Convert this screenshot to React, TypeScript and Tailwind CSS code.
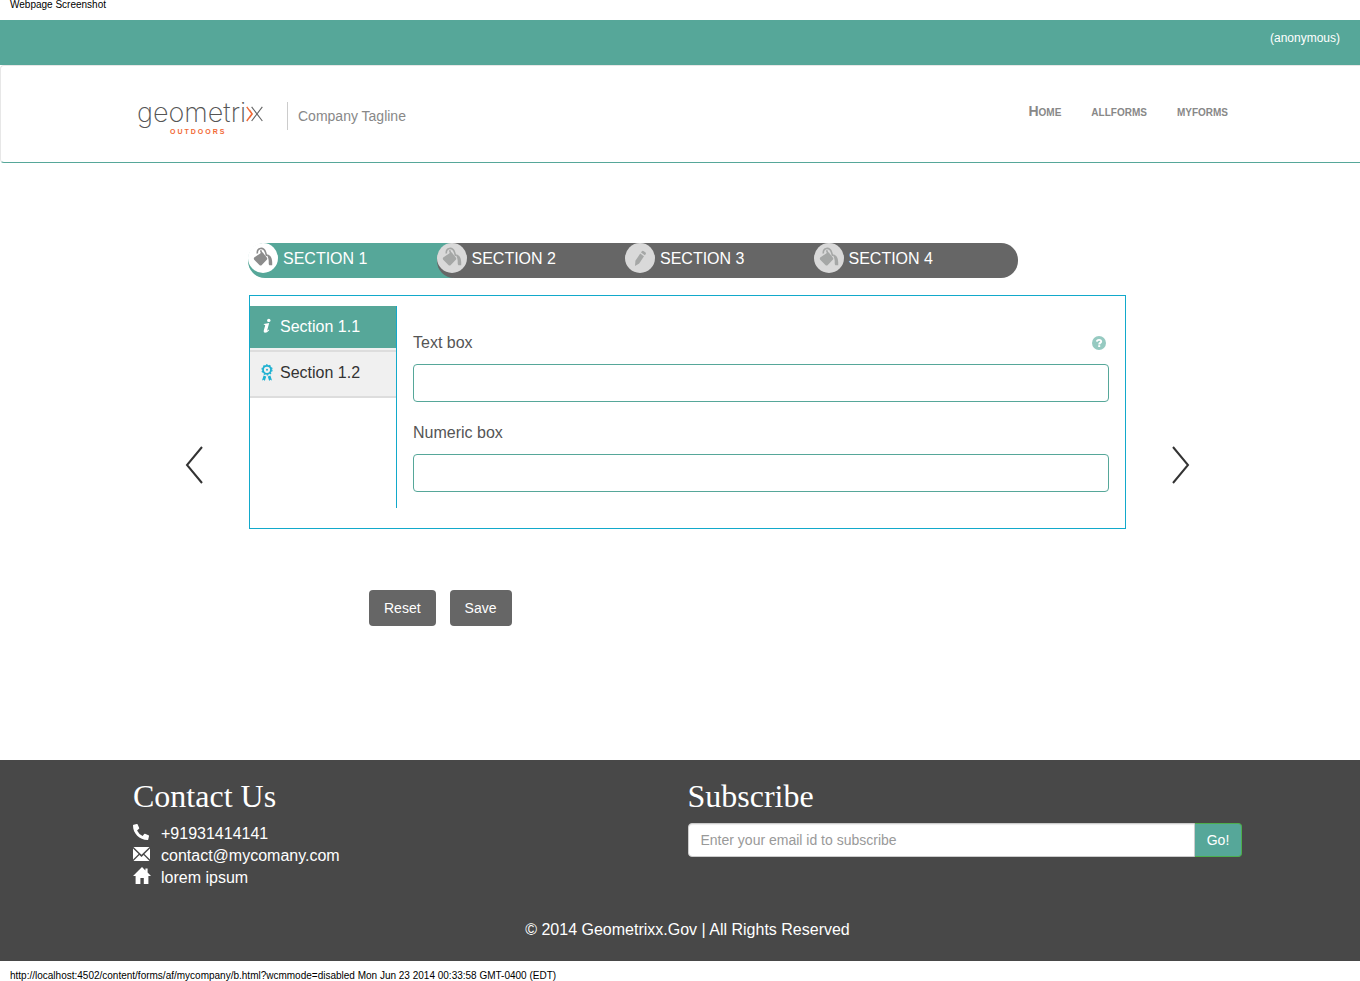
import React from "react";
import { FaPhoneAlt } from "react-icons/fa";

type StepIcon = "bucket" | "pencil";

const steps: { label: string; icon: StepIcon; active?: boolean }[] = [
  { label: "SECTION 1", icon: "bucket", active: true },
  { label: "SECTION 2", icon: "bucket" },
  { label: "SECTION 3", icon: "pencil" },
  { label: "SECTION 4", icon: "bucket" },
];

const navLinks = ["Home", "allforms", "myforms"];

function Logo() {
  return (
    <a href="#" className="flex w-[126px] flex-col" aria-label="geometrixx outdoors">
      <span className="flex h-[30px] items-center">
        <span className="font-['Inter'] text-[27px] leading-[30px] font-extralight text-[#555]">geometri</span>
        <svg width="18" height="30" viewBox="0 0 18 30" fill="none" strokeWidth="1.2" aria-hidden="true">
          <path d="M.8 8.5 6.3 16 .8 23.5M3.6 11.8 6.6 16 3.6 20.2" stroke="#f26a36" strokeWidth="1.5" />
          <path d="M6 8.5 17.4 23.5M17.4 8.5 6 23.5" stroke="#666" />
        </svg>
      </span>
      <span className="pl-[33px] font-['Liberation_Sans',sans-serif] text-[7px] leading-2 font-bold tracking-[2px] text-[#f26a36]">
        OUTDOORS
      </span>
    </a>
  );
}

function BucketIcon() {
  return (
    <svg width="30" height="30" viewBox="0 0 30 30" aria-hidden="true">
      <path d="M9.4 10.5C8.4 4.6 15.6 3.4 17.6 9.4L18.6 13" fill="none" stroke="currentColor" strokeWidth="1.6" />
      <path d="M6.2 14.6 13.6 9.4Q14.4 9 15 9.8L19 14.8Q19.6 15.8 18.8 16.8L13.8 22Q12.6 23 11.4 22L6.2 16.8Q5.4 15.4 6.2 14.6Z" fill="currentColor" />
      <path d="M12.6 7.2 14 11" fill="none" stroke="currentColor" strokeWidth="1.6" />
      <path d="M18.4 11.6C22.4 11.4 24.8 15.4 24.2 22.2H21.4C20.2 21 21 19 20.6 17 20.4 15 19.6 13 18.4 11.6Z" fill="currentColor" />
    </svg>
  );
}

function PencilIcon() {
  return (
    <svg width="30" height="30" viewBox="0 0 30 30" fill="currentColor" aria-hidden="true">
      <path d="M10 23 10.4 17.8 15.2 10.6 19 13.2 14.2 20.4Z" />
      <path d="M16 9.6 17 8.2Q17.6 7.6 18.4 8L20.6 9.6Q21.2 10.2 20.8 10.9L19.8 12.2Z" />
    </svg>
  );
}

function InfoIcon() {
  return (
    <svg width="12" height="18" viewBox="0 0 12 18" fill="currentColor" aria-hidden="true">
      <circle cx="7.8" cy="2.4" r="1.7" />
      <path d="M2.8 6 8.2 5 6.2 12.2Q6.2 13.2 7.6 11.6L8.2 12.2Q5.8 15 3.8 14.8 2.2 14.4 2.8 12.2L4.2 7.4Q4.2 6.6 2.8 6.8Z" />
    </svg>
  );
}

function RibbonIcon() {
  return (
    <svg width="12" height="18" viewBox="0 0 12 18" aria-hidden="true">
      <circle cx="6" cy="5.8" r="4" fill="none" stroke="currentColor" strokeWidth="1.8" />
      <circle cx="6" cy="5.8" r="5" fill="none" stroke="currentColor" strokeWidth="1.2" strokeDasharray="1.6 1.54" />
      <circle cx="6" cy="5.8" r="1" fill="currentColor" />
      <path d="M2.6 11.4 5.2 12.4 3.8 17 2.8 15.8 1 16.6ZM9.4 11.4 6.8 12.4 8.2 17 9.2 15.8 11 16.6Z" fill="currentColor" />
    </svg>
  );
}

function HelpIcon() {
  return (
    <svg width="14" height="14" viewBox="0 0 14 14" aria-hidden="true">
      <circle cx="7" cy="7" r="7" fill="#96cac1" />
      <path d="M4.9 5.6C5 3.4 9.2 3.2 9.2 5.5 9.2 7 7.2 6.8 7.2 8.4" fill="none" stroke="#fff" strokeWidth="1.9" />
      <rect x="6.2" y="9.2" width="2" height="1.8" fill="#fff" />
    </svg>
  );
}

function EnvelopeIcon() {
  return (
    <svg width="17" height="14" viewBox="0 0 17 14" fill="currentColor" aria-hidden="true">
      <path d="M.5 0H16.5L8.5 7.8ZM0 1.4 5.6 7 0 12.4ZM17 1.4 11.4 7 17 12.4ZM.5 14 6.4 8 8.5 10 10.6 8 16.5 14Z" />
    </svg>
  );
}

function HomeIcon() {
  return (
    <svg width="18" height="17" viewBox="0 0 18 17" fill="currentColor" aria-hidden="true">
      <path d="M9 0 12.4 3.4V1.4H14.6V5.4L18 9H15.4V17H10.8V11H7.4V17H2.6V9H0Z" />
    </svg>
  );
}

function Chevron({ direction }: { direction: "left" | "right" }) {
  return (
    <button type="button" aria-label={direction === "left" ? "Previous" : "Next"}>
      <svg width="18" height="38" viewBox="0 0 18 38" fill="none" stroke="#333" strokeWidth="2" aria-hidden="true">
        <path d={direction === "left" ? "M17 1 2 19 17 37" : "M1 1 16 19 1 37"} />
      </svg>
    </button>
  );
}

export default function App() {
  return (
    <div className="bg-white font-['Liberation_Sans',Arial,sans-serif] text-[#555]">
      <p className="h-5 pl-2.5 text-[10px] leading-[10px] text-black">Webpage Screenshot</p>

      <div className="flex h-[45px] justify-end bg-[#56a799] px-5 pt-2.5 text-xs text-white">(anonymous)</div>

      <header className="flex h-[98px] items-start justify-between rounded-l border border-r-0 border-[#e7e7e7] border-b-[#56a799] pr-[132px] pl-[136px]">
        <div className="flex pt-8">
          <Logo />
          <span className="mt-1 ml-6 flex h-7 items-center border-l border-[#ccc] pl-2.5 text-sm text-[#888]">
            Company Tagline
          </span>
        </div>
        <nav className="flex gap-[30px] pt-[35px] text-sm font-bold text-[#888] [font-variant:small-caps]">
          {navLinks.map((link) => (
            <a key={link} href="#">
              {link}
            </a>
          ))}
        </nav>
      </header>

      <main className="flex min-h-[597px] pr-[170px] pl-[185px]">
        <div className="flex w-16 shrink-0 items-start pt-[283px]">
          <Chevron direction="left" />
        </div>

        <form className="min-w-0 flex-1 pt-20" onSubmit={(e) => e.preventDefault()}>
          <ol className="-ml-px flex max-w-[770px]">
            {steps.map((step) => (
              <li
                key={step.label}
                className={`h-[35px] flex-1 rounded-[17px] not-first:-ml-4 not-last:rounded-r-none ${
                  step.active ? "bg-[#56a799]" : "bg-[#666]"
                }`}
              >
                <button type="button" className="flex w-full items-start gap-[5px] text-base leading-8 text-white">
                  <span
                    className={`size-[30px] shrink-0 rounded-full ${
                      step.active ? "bg-white text-[#8c8c8c]" : "bg-[#d9d9d9] text-[#a5a7a6]"
                    }`}
                  >
                    {step.icon === "bucket" ? <BucketIcon /> : <PencilIcon />}
                  </span>
                  {step.label}
                </button>
              </li>
            ))}
          </ol>

          <section className="mt-[17px] flex border border-[#12a9cb] pt-2.5 pb-5">
            <div className="w-[147px] shrink-0 border-r border-[#12a9cb] text-base">
              <button type="button" className="flex h-[42px] w-full items-center gap-[7px] bg-[#56a799] pl-[11px] text-white">
                <InfoIcon />
                Section 1.1
              </button>
              <div className="h-0.5 bg-[#f0f0f0]" />
              <button
                type="button"
                className="flex h-12 w-full items-center gap-[7px] border-y-2 border-[#ddd] bg-[#f0f0f0] pb-0.5 pl-[11px] text-[#333]"
              >
                <span className="text-[#1fb1d1]">
                  <RibbonIcon />
                </span>
                Section 1.2
              </button>
            </div>

            <div className="flex-1 px-4 pt-[25px] pb-4 text-base">
              <div className="flex items-center justify-between pr-[3px]">
                <label htmlFor="text-box">Text box</label>
                <button type="button" aria-label="Help">
                  <HelpIcon />
                </button>
              </div>
              <input id="text-box" type="text" className="mt-[9px] block h-[38px] w-full rounded border border-[#56a799] px-3" />
              <label htmlFor="numeric-box" className="mt-[19px] block">
                Numeric box
              </label>
              <input
                id="numeric-box"
                type="text"
                inputMode="numeric"
                className="mt-[9px] block h-[38px] w-full rounded border border-[#56a799] px-3"
              />
            </div>
          </section>

          <div className="mt-[61px] flex gap-3.5 pl-[120px] text-sm text-white">
            <button type="reset" className="h-9 rounded bg-[#666] px-[15px]">
              Reset
            </button>
            <button type="submit" className="h-9 rounded bg-[#666] px-[15px]">
              Save
            </button>
          </div>
        </form>

        <div className="flex w-16 shrink-0 items-start justify-end pt-[283px]">
          <Chevron direction="right" />
        </div>
      </main>

      <footer className="h-[201px] bg-[#484848] pr-[118px] pl-[133px] text-base text-white">
        <div className="grid h-[158px] grid-cols-2 pt-5">
          <div>
            <h2 className="font-['Liberation_Serif',serif] text-[32px] leading-8">Contact Us</h2>
            <ul className="mt-[11px] leading-[22px]">
              <li className="flex items-start">
                <span className="w-7 pt-px">
                  <FaPhoneAlt size={16} />
                </span>
                +91931414141
              </li>
              <li className="flex items-start">
                <span className="w-7 pt-0.5">
                  <EnvelopeIcon />
                </span>
                contact@mycomany.com
              </li>
              <li className="flex items-start">
                <span className="w-7">
                  <HomeIcon />
                </span>
                lorem ipsum
              </li>
            </ul>
          </div>
          <form onSubmit={(e) => e.preventDefault()}>
            <h2 className="font-['Liberation_Serif',serif] text-[32px] leading-8">Subscribe</h2>
            <div className="mt-[11px] flex h-[34px] text-sm">
              <input
                type="email"
                aria-label="Email"
                placeholder="Enter your email id to subscribe"
                className="min-w-0 flex-1 rounded-l border border-[#ccc] bg-white px-3 text-[#555] shadow-[inset_0_1px_1px_rgba(0,0,0,0.075)] placeholder:text-[#999]"
              />
              <button type="submit" className="w-[47px] rounded-r border border-l-0 border-[#4cae4c] bg-[#56a799]">
                Go!
              </button>
            </div>
          </form>
        </div>
        <p className="text-center leading-6">© 2014 Geometrixx.Gov | All Rights Reserved</p>
      </footer>

      <p className="h-5 pt-[9px] pl-2.5 text-[10px] leading-[11px] text-black">
        http://localhost:4502/content/forms/af/mycompany/b.html?wcmmode=disabled Mon Jun 23 2014 00:33:58 GMT-0400 (EDT)
      </p>
    </div>
  );
}
